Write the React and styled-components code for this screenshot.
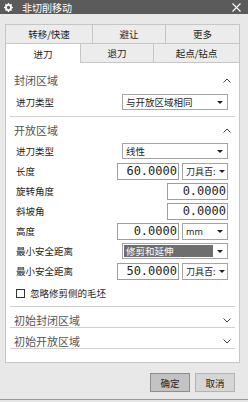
import React from "react";
import styled, { createGlobalStyle } from "styled-components";
import { BsGearFill } from "react-icons/bs";

const GlobalStyle = createGlobalStyle`
  html, body { margin: 0; padding: 0; background: #e6e6e6; }
  body { font-family: "Noto Sans CJK SC", "Noto Sans", sans-serif; color: #222; }
  * { box-sizing: border-box; }
`;

const Window = styled.div`
  width: 248px;
  height: 400px;
  display: flex;
  flex-direction: column;
  background: #e8e8e8;
  border-bottom: 1px solid #9a9a9a;
`;

const TitleBar = styled.div`
  height: 14px;
  background: #5b5b5b;
  color: #fff;
  display: flex;
  align-items: center;
  gap: 9px;
  padding: 0 7px 0 4px;
  font-size: 10px;
  & > span { flex: 1; }
`;

const TabArea = styled.div`
  padding: 10px 8px 0 5px;
`;

const TabRow = styled.div`
  display: grid;
  grid-template-columns: ${p => p.cols};
  height: ${p => p.h}px;
`;

const Tab = styled.div`
  display: flex;
  align-items: center;
  justify-content: center;
  font-size: 9.5px;
  color: #222;
  background: ${p => (p.active ? "#fff" : "#ececec")};
  border-top: 1px solid #c6c6c6;
  border-right: 1px solid #c6c6c6;
  border-bottom: ${p => (p.active || p.top ? "none" : "1px solid #c6c6c6")};
  &:first-child { border-left: 1px solid #c6c6c6; }
`;

const Panel = styled.div`
  height: 300px;
  margin: 0 8px 0 5px;
  background: #fff;
  border: 1px solid #c6c6c6;
  border-top: none;
  padding-top: 7px;
  display: flex;
  flex-direction: column;
`;

const Header = styled.div`
  height: 20px;
  margin-top: ${p => p.mt || 0}px;
  padding: ${p => (p.collapsed ? "6px" : "0")} 8px 0 8px;
  display: flex;
  align-items: center;
  justify-content: space-between;
  font-size: 11px;
  color: #555;
`;

const Divider = styled.div`
  height: 1px;
  background: #cfcfcf;
  margin: ${p => p.mt || 0}px 4px 0 4px;
`;

const Row = styled.div`
  height: 20px;
  margin-top: ${p => p.mt || 0}px;
  padding: 0 11px 0 10px;
  display: flex;
  align-items: center;
  justify-content: space-between;
`;

const Label = styled.span`
  font-size: 9.5px;
  color: #1e1e1e;
`;

const Pair = styled.div`
  display: flex;
  gap: 3px;
`;

const SelectBox = styled.div`
  width: ${p => p.w}px;
  height: ${p => p.h || 16}px;
  border: 1px solid #a4a4a4;
  background: #fff;
  display: flex;
  align-items: stretch;
  padding: 1px 0 1px 1px;
`;

const SelectText = styled.div`
  flex: 1;
  min-width: 0;
  white-space: nowrap;
  display: flex;
  align-items: center;
  padding-left: 2px;
  font-size: ${p => p.fs || 9.5}px;
  font-family: ${p => (p.latin ? '"Noto Sans", sans-serif' : "inherit")};
  background: ${p => (p.dark ? "#6e6e6e" : "transparent")};
  color: ${p => (p.dark ? "#fff" : "#1e1e1e")};
`;

const Caret = styled.div`
  width: ${p => p.w || 14}px;
  flex: none;
  display: flex;
  align-items: center;
  justify-content: center;
  &::after {
    content: "";
    border-left: 3px solid transparent;
    border-right: 3px solid transparent;
    border-top: 3px solid #222;
  }
`;

const NumberBox = styled.div`
  width: ${p => p.w}px;
  height: 17px;
  border: 1px solid #9e9e9e;
  display: flex;
  align-items: center;
  justify-content: flex-end;
  padding-right: 1px;
  font-family: "DejaVu Sans Mono", "Liberation Mono", monospace;
  font-size: 12px;
  color: #1e1e1e;
  white-space: nowrap;
`;

const CheckRow = styled.div`
  height: 20px;
  margin-top: 2px;
  padding-left: 10px;
  display: flex;
  align-items: center;
  gap: 5px;
`;

const CheckBox = styled.div`
  width: 9px;
  height: 9px;
  border: 1px solid #333;
  background: #fff;
`;

const Footer = styled.div`
  display: flex;
  justify-content: flex-end;
  gap: 5px;
  padding: 10px 13px 0 0;
`;

const Button = styled.div`
  width: 40px;
  height: 19px;
  display: flex;
  align-items: center;
  justify-content: center;
  font-size: 9.5px;
  color: #222;
  background: ${p => (p.primary ? "#c3c3c3" : "#d6d6d6")};
  border: 1px solid ${p => (p.primary ? "#8e8e8e" : "#b4b4b4")};
`;

const Chevron = ({ up }) => (
  <svg width="8" height="5" viewBox="0 0 8 5">
    <polyline
      points={up ? "0.5,4.5 4,1 7.5,4.5" : "0.5,0.5 4,4 7.5,0.5"}
      fill="none"
      stroke="#444"
      strokeWidth="1"
    />
  </svg>
);

const Select = ({ w, text, dark, fs, latin, h, cw }) => (
  <SelectBox w={w} h={h}>
    <SelectText dark={dark} fs={fs} latin={latin}>{text}</SelectText>
    <Caret w={cw} />
  </SelectBox>
);

export default function App() {
  return (
    <>
      <GlobalStyle />
      <Window>
        <TitleBar>
          <BsGearFill size={9} color="#fff" />
          <span>非切削移动</span>
          <svg width="9" height="9" viewBox="0 0 9 9">
            <path d="M0.5 0.5 L8.5 8.5 M8.5 0.5 L0.5 8.5" stroke="#fff" strokeWidth="1.1" />
          </svg>
        </TitleBar>

        <TabArea>
          <TabRow cols="88px 73px 74px" h={19}>
            <Tab top>转移/快速</Tab>
            <Tab top>避让</Tab>
            <Tab top>更多</Tab>
          </TabRow>
          <TabRow cols="76px 73px 86px" h={20}>
            <Tab active>进刀</Tab>
            <Tab>退刀</Tab>
            <Tab>起点/钻点</Tab>
          </TabRow>
        </TabArea>

        <Panel>
          <Header>
            封闭区域
            <Chevron up />
          </Header>
          <Row mt={2}>
            <Label>进刀类型</Label>
            <Select w={106} text="与开放区域相同" />
          </Row>
          <Divider mt={4} />

          <Header mt={3}>
            开放区域
            <Chevron up />
          </Header>
          <Row mt={1}>
            <Label>进刀类型</Label>
            <Select w={106} text="线性" />
          </Row>
          <Row>
            <Label>长度</Label>
            <Pair>
              <NumberBox w={62}>60.0000</NumberBox>
              <Select w={46} h={17} text="刀具百:" fs={9} cw={11} />
            </Pair>
          </Row>
          <Row>
            <Label>旋转角度</Label>
            <NumberBox w={61}>0.0000</NumberBox>
          </Row>
          <Row>
            <Label>斜坡角</Label>
            <NumberBox w={61}>0.0000</NumberBox>
          </Row>
          <Row>
            <Label>高度</Label>
            <Pair>
              <NumberBox w={62}>0.0000</NumberBox>
              <Select w={46} h={17} text="mm" fs={9} latin />
            </Pair>
          </Row>
          <Row>
            <Label>最小安全距离</Label>
            <Select w={106} text="修剪和延伸" dark />
          </Row>
          <Row>
            <Label>最小安全距离</Label>
            <Pair>
              <NumberBox w={62}>50.0000</NumberBox>
              <Select w={46} h={17} text="刀具百:" fs={9} cw={11} />
            </Pair>
          </Row>
          <CheckRow>
            <CheckBox />
            <Label>忽略修剪侧的毛坯</Label>
          </CheckRow>
          <Divider mt={3} />

          <Header collapsed>
            初始封闭区域
            <Chevron />
          </Header>
          <Divider />
          <Header collapsed>
            初始开放区域
            <Chevron />
          </Header>
          <Divider />
        </Panel>

        <Footer>
          <Button primary>确定</Button>
          <Button>取消</Button>
        </Footer>
      </Window>
    </>
  );
}
